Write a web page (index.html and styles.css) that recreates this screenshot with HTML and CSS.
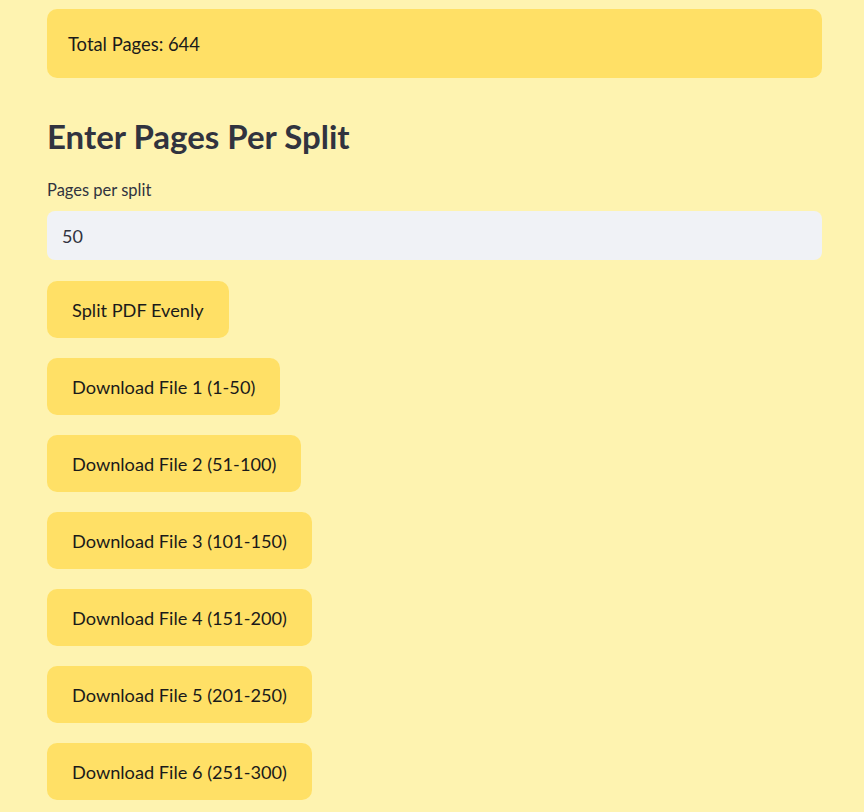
FILE: index.html
```html
<!DOCTYPE html>
<html>
<head>
<meta charset="utf-8">
<link rel="stylesheet" href="styles.css">
</head>
<body>
<main class="main">
  <div class="info">Total Pages: 644</div>
  <h2 class="heading">Enter Pages Per Split</h2>
  <label class="label">Pages per split</label>
  <div class="input">50</div>
  <div class="buttons">
    <button class="btn">Split PDF Evenly</button>
    <button class="btn">Download File 1 (1-50)</button>
    <button class="btn">Download File 2 (51-100)</button>
    <button class="btn">Download File 3 (101-150)</button>
    <button class="btn">Download File 4 (151-200)</button>
    <button class="btn">Download File 5 (201-250)</button>
    <button class="btn">Download File 6 (251-300)</button>
  </div>
</main>
</body>
</html>
```
FILE: styles.css
```css
html, body {
  margin: 0;
  padding: 0;
  background: #fef3b0;
  overflow: hidden;
}
body {
  font-family: "Lato", "Noto Sans", sans-serif;
  color: #31333f;
}
.main {
  width: 775px;
  margin-left: 47px;
  padding-top: 9px;
  display: flex;
  flex-direction: column;
}
.info {
  height: 69px;
  box-sizing: border-box;
  background: #ffe066;
  border-radius: 10px;
  padding: 0 21px;
  display: flex;
  align-items: center;
  font-size: 18.4px;
  color: #1a1a1a;
}
.heading {
  margin: 36px 0 0 0;
  font-size: 33px;
  font-weight: 700;
  line-height: 44px;
  color: #31333f;
}
.label {
  margin-top: 22px;
  font-size: 16.5px;
  line-height: 20px;
  color: #31333f;
}
.input {
  margin-top: 11px;
  height: 49px;
  box-sizing: border-box;
  background: #f0f2f6;
  border-radius: 8px;
  padding: 0 15px;
  display: flex;
  align-items: center;
  font-size: 18px;
  color: #31333f;
}
.buttons {
  margin-top: 21px;
  display: flex;
  flex-direction: column;
  align-items: flex-start;
  gap: 20px;
}
.btn {
  height: 57px;
  box-sizing: border-box;
  padding: 0 25px;
  border: none;
  border-radius: 10px;
  background: #ffe066;
  font-family: inherit;
  font-size: 18.2px;
  color: #1a1a1a;
}
```
